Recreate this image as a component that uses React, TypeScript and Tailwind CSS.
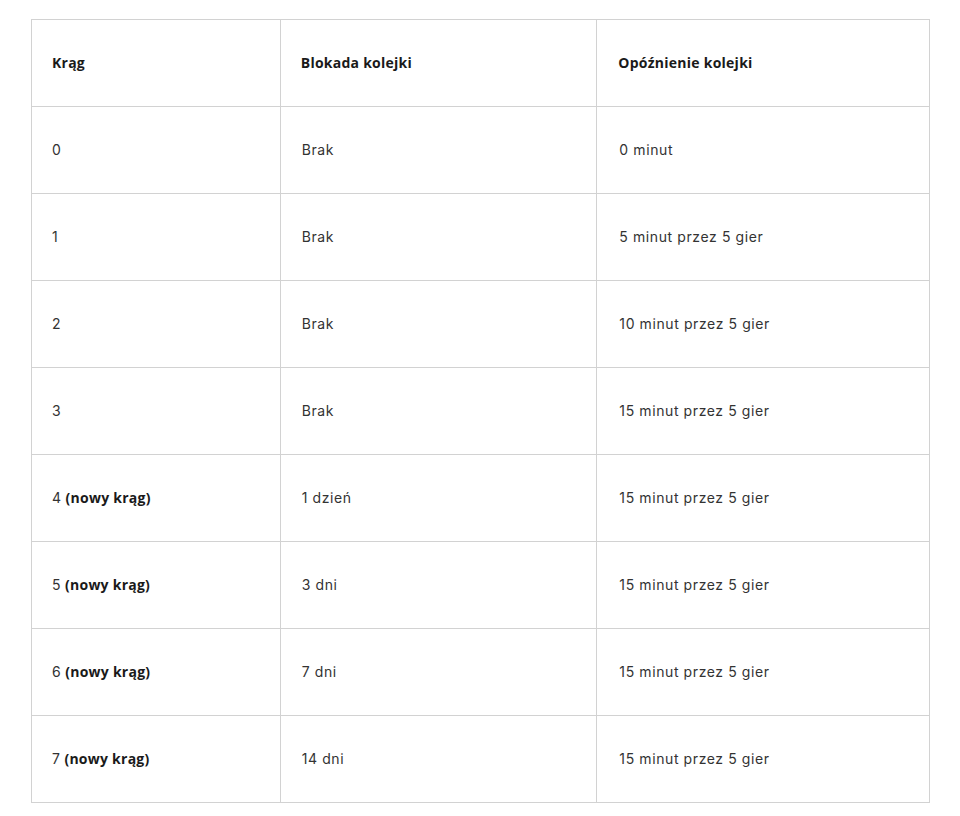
const rows: { krag: string; nowy?: boolean; blokada: string; opoznienie: string }[] = [
  { krag: "0", blokada: "Brak", opoznienie: "0 minut" },
  { krag: "1", blokada: "Brak", opoznienie: "5 minut przez 5 gier" },
  { krag: "2", blokada: "Brak", opoznienie: "10 minut przez 5 gier" },
  { krag: "3", blokada: "Brak", opoznienie: "15 minut przez 5 gier" },
  { krag: "4", nowy: true, blokada: "1 dzień", opoznienie: "15 minut przez 5 gier" },
  { krag: "5", nowy: true, blokada: "3 dni", opoznienie: "15 minut przez 5 gier" },
  { krag: "6", nowy: true, blokada: "7 dni", opoznienie: "15 minut przez 5 gier" },
  { krag: "7", nowy: true, blokada: "14 dni", opoznienie: "15 minut przez 5 gier" },
];

const bold = "font-['Open_Sans',sans-serif] font-bold tracking-[0.25px] text-[#1a1a1a]";
const cell = "border border-[#d2d2d2] h-[87px] pr-4 pb-[2px] align-middle";

export default function App() {
  return (
    <div className="min-h-screen bg-white pt-[19px] pl-[31px]">
      <table className="w-[899px] border-collapse text-[14px] text-[#333] font-['Inter',sans-serif] tracking-[0.6px]">
        <colgroup>
          <col className="w-[249px]" />
          <col className="w-[317px]" />
          <col className="w-[333px]" />
        </colgroup>
        <thead>
          <tr>
            <th className={`${cell} pl-[20px] text-left ${bold}`}>Krąg</th>
            <th className={`${cell} pl-[20px] text-left ${bold}`}>Blokada kolejki</th>
            <th className={`${cell} pl-[21px] text-left ${bold}`}>Opóźnienie kolejki</th>
          </tr>
        </thead>
        <tbody>
          {rows.map((r) => (
            <tr key={r.krag}>
              <td className={`${cell} pl-[20px]`}>
                {r.krag}
                {r.nowy && <span className={bold}> (nowy krąg)</span>}
              </td>
              <td className={`${cell} pl-[21px]`}>{r.blokada}</td>
              <td className={`${cell} pl-[22px]`}>{r.opoznienie}</td>
            </tr>
          ))}
        </tbody>
      </table>
    </div>
  );
}
